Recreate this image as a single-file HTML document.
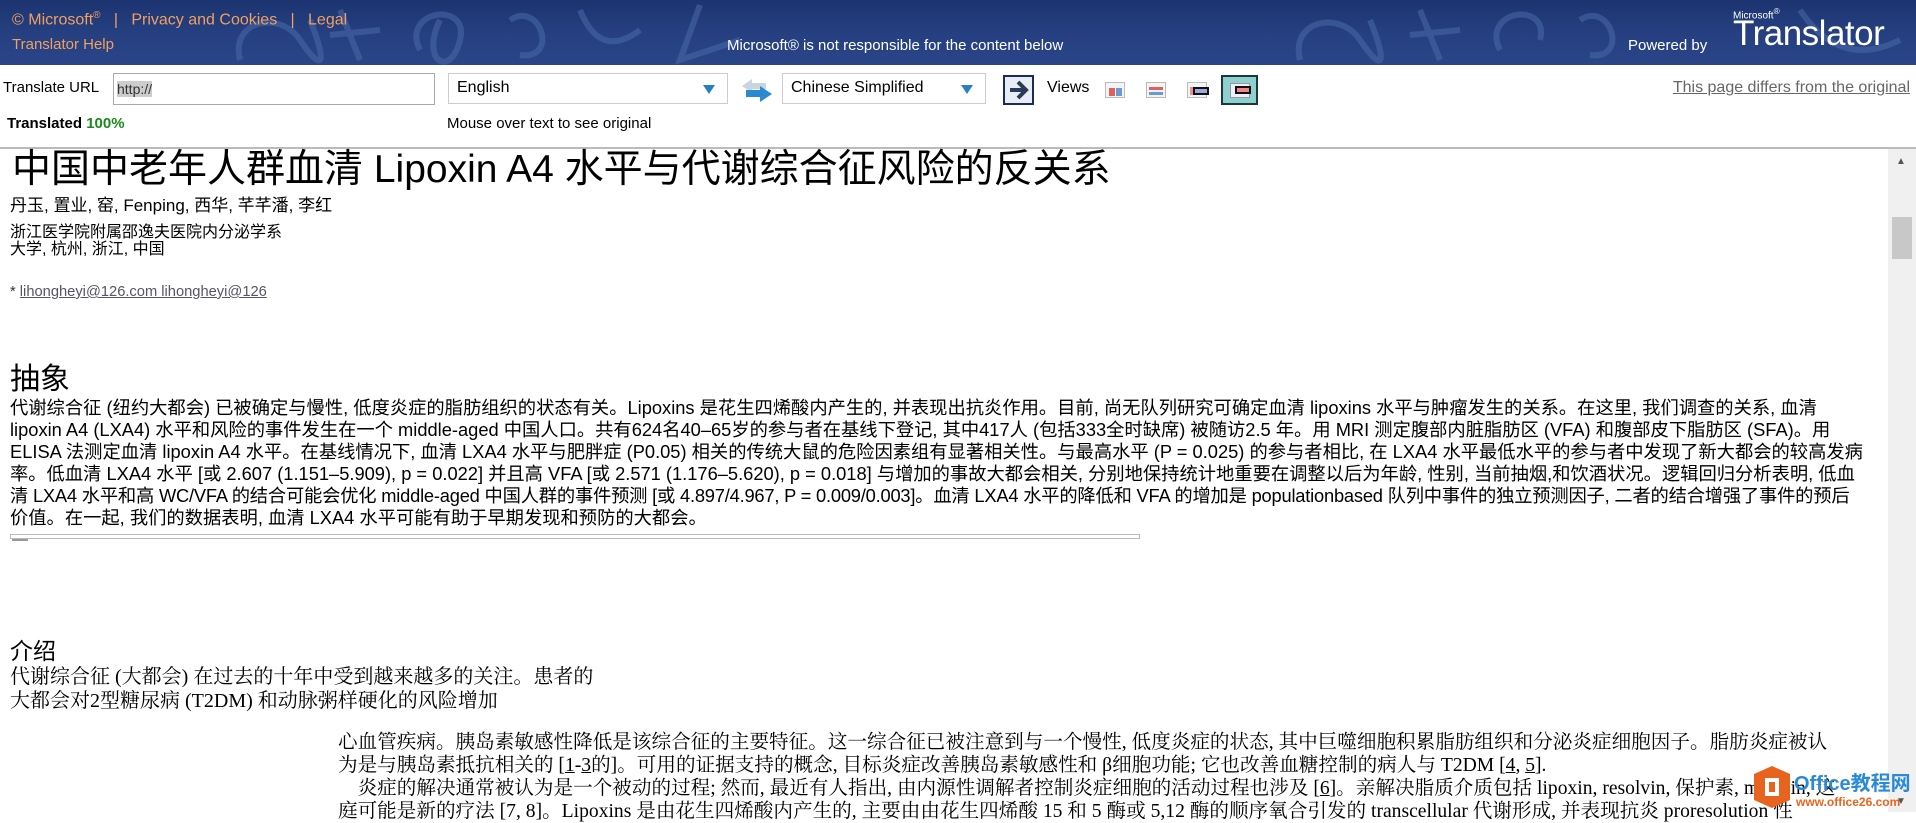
<!DOCTYPE html>
<html><head><meta charset="utf-8"><style>
*{margin:0;padding:0;box-sizing:border-box}
body{width:1916px;height:812px;overflow:hidden;background:#fff;position:relative;font-family:"Liberation Sans","Noto Sans CJK SC",sans-serif;color:#000}
.a{position:absolute;white-space:nowrap}
#hdr{position:absolute;left:0;top:0;width:1916px;height:65px;background:linear-gradient(180deg,#1c3470 0%,#253f80 50%,#2a4688 100%);overflow:hidden}
.or{color:#f0a060;font-size:16px}
.wh{color:#fff;font-size:15px}
.sel{position:absolute;height:31px;border:1px solid #ccc;background:#fff;font-size:16px;padding:5px 8px}
.tri{position:absolute;right:12px;top:11px;width:0;height:0;border-left:6px solid transparent;border-right:6px solid transparent;border-top:9px solid #2a7fc0}
.cal{font-family:"Liberation Sans Narrow","Liberation Sans","Noto Sans CJK SC",sans-serif}
.ser{font-family:"Liberation Serif","Noto Serif CJK SC",serif}
.ab div{height:22px;line-height:22px;font-size:18.3px}
.vi{position:absolute;top:82px;width:20px;height:16px;border:1px solid #bbb;background:#f4f4f4}
</style></head><body>
<div id="hdr">
<svg width="1916" height="65" style="position:absolute;left:0;top:0" fill="none" stroke="#4a6aa8" stroke-width="6" opacity="0.55">
<path d="M240 60 C230 20 280 10 300 40 S330 70 310 20"/><path d="M340 10 L360 60 M330 35 L380 30"/><path d="M420 50 C400 10 470 0 460 40 S420 60 440 20"/><path d="M510 20 C540 0 560 60 520 55"/><path d="M580 10 Q600 60 640 30"/><path d="M700 5 L680 60 L740 40"/>
<path d="M1300 60 C1290 20 1340 10 1360 40 S1390 70 1370 20"/><path d="M1420 10 L1440 60 M1410 35 L1460 30"/><path d="M1500 50 C1480 10 1550 0 1540 40"/><path d="M1580 20 C1610 0 1630 60 1590 55"/><path d="M1800 10 Q1840 70 1900 40"/>
</svg>
<div class="a or" style="left:12px;top:10px">© Microsoft<sup style="font-size:10px">®</sup> &nbsp; | &nbsp; Privacy and Cookies &nbsp; | &nbsp; Legal</div>
<div class="a or" style="left:12px;top:36px;font-size:15px">Translator Help</div>
<div class="a wh" style="left:727px;top:37px">Microsoft® is not responsible for the content below</div>
<div class="a wh" style="left:1628px;top:37px">Powered by</div>
<div class="a" style="left:1733px;top:6px;color:#fff;font-size:10px">Microsoft<sup>®</sup></div>
<div class="a" style="left:1733px;top:14px;color:#fff;font-size:35px;letter-spacing:-0.5px">Translator</div>
</div>
<div class="a" style="left:3px;top:79px;font-size:15px">Translate URL</div>
<div class="a" style="left:113px;top:73px;width:322px;height:32px;border:1px solid #aaa;background:#fff"><span style="position:absolute;left:3px;top:7px;background:#ccc;font-size:14px;color:#333">http://</span></div>
<div class="sel" style="left:448px;top:73px;width:280px">English<div class="tri"></div></div>
<svg class="a" style="left:738px;top:76px" width="36" height="28"><path d="M4 10 L14 3 L14 7 L28 7 L28 13 L14 13 L14 17Z" fill="#c8d4e0"/><path d="M34 18 L22 10 L22 14 L8 14 L8 21 L22 21 L22 26Z" fill="#2a8ad0"/></svg>
<div class="sel" style="left:782px;top:73px;width:204px">Chinese Simplified<div class="tri"></div></div>
<div class="a" style="left:1003px;top:75px;width:31px;height:30px;border:2px solid #1c2a5a;background:#e8ecf4"><svg width="27" height="26"><path d="M5 13 H20 M13 5 L21 13 L13 21" stroke="#2a3a5a" stroke-width="4" fill="none"/></svg></div>
<div class="a" style="left:1047px;top:79px;font-size:16px">Views</div>
<div class="vi" style="left:1105px"><div style="position:absolute;left:3px;top:5px;width:6px;height:8px;background:#e06060"></div><div style="position:absolute;left:10px;top:5px;width:6px;height:8px;background:#6a9ad0"></div></div>
<div class="vi" style="left:1146px"><div style="position:absolute;left:2px;top:4px;width:14px;height:3px;background:#e06060"></div><div style="position:absolute;left:2px;top:9px;width:14px;height:3px;background:#6a9ad0"></div></div>
<div class="vi" style="left:1187px"><div style="position:absolute;left:2px;top:4px;width:8px;height:8px;background:#e89090"></div><div style="position:absolute;left:5px;top:4px;width:16px;height:8px;border:2px solid #111;background:#9ad"></div></div>
<div class="a" style="left:1221px;top:75px;width:37px;height:30px;border:2px solid #1a3a3a;background:#8ed0d0"><div style="position:absolute;left:7px;top:6px;width:20px;height:15px;border:1px solid #999;background:#eef"></div><div style="position:absolute;left:12px;top:9px;width:16px;height:8px;border:2px solid #111;background:#e88"></div></div>
<div class="a" style="right:6px;top:79px;font-size:16px;color:#666;text-decoration:underline">This page differs from the original</div>
<div class="a" style="left:7px;top:115px;font-size:15px;font-weight:bold">Translated <span style="color:#1a8a1a">100%</span></div>
<div class="a" style="left:447px;top:115px;font-size:15px">Mouse over text to see original</div>
<div class="a" style="left:0;top:147px;width:1916px;height:2px;background:#bbb"></div>
<div class="a" style="left:1888px;top:149px;width:28px;height:663px;background:#f0f0f0"></div>
<div class="a" style="left:1892px;top:217px;width:20px;height:42px;background:#c8c8c8"></div>
<div class="a" style="left:1896px;top:156px;font-size:10px;color:#555">▲</div>
<div class="a" style="left:1896px;top:796px;font-size:10px;color:#555">▼</div>
<div class="a cal" style="left:12px;top:146px;font-size:39px;line-height:48px">中国中老年人群血清 Lipoxin A4 水平与代谢综合征风险的反关系</div>
<div class="a cal" style="left:10px;top:191px;font-size:17px">丹玉, 置业, 窑, Fenping, 西华, 芊芊潘, 李红</div>
<div class="a cal" style="left:10px;top:224px;font-size:16px;line-height:17px">浙江医学院附属邵逸夫医院内分泌学系<br>大学, 杭州, 浙江, 中国</div>
<div class="a cal" style="left:10px;top:284px;font-size:14.7px;color:#333">* <span style="text-decoration:underline;color:#556">lihongheyi@126.com lihongheyi@126</span></div>
<div class="a cal" style="left:10px;top:354px;font-size:30px">抽象</div>
<div class="a ab cal" style="left:10px;top:397px">
<div>代谢综合征 (纽约大都会) 已被确定与慢性, 低度炎症的脂肪组织的状态有关。Lipoxins 是花生四烯酸内产生的, 并表现出抗炎作用。目前, 尚无队列研究可确定血清 lipoxins 水平与肿瘤发生的关系。在这里, 我们调查的关系, 血清</div>
<div>lipoxin A4 (LXA4) 水平和风险的事件发生在一个 middle-aged 中国人口。共有624名40–65岁的参与者在基线下登记, 其中417人 (包括333全时缺席) 被随访2.5 年。用 MRI 测定腹部内脏脂肪区 (VFA) 和腹部皮下脂肪区 (SFA)。用</div>
<div>ELISA 法测定血清 lipoxin A4 水平。在基线情况下, 血清 LXA4 水平与肥胖症 (P0.05) 相关的传统大鼠的危险因素组有显著相关性。与最高水平 (P = 0.025) 的参与者相比, 在 LXA4 水平最低水平的参与者中发现了新大都会的较高发病</div>
<div>率。低血清 LXA4 水平 [或 2.607 (1.151–5.909), p = 0.022] 并且高 VFA [或 2.571 (1.176–5.620), p = 0.018] 与增加的事故大都会相关, 分别地保持统计地重要在调整以后为年龄, 性别, 当前抽烟,和饮酒状况。逻辑回归分析表明, 低血</div>
<div style="letter-spacing:-0.2px">清 LXA4 水平和高 WC/VFA 的结合可能会优化 middle-aged 中国人群的事件预测 [或 4.897/4.967, P = 0.009/0.003]。血清 LXA4 水平的降低和 VFA 的增加是 populationbased 队列中事件的独立预测因子, 二者的结合增强了事件的预后</div>
<div>价值。在一起, 我们的数据表明, 血清 LXA4 水平可能有助于早期发现和预防的大都会。</div>
</div>
<div class="a" style="left:10px;top:534px;width:1130px;height:5px;border:1px solid #bbb"></div>
<div class="a" style="left:12px;top:539px;width:16px;height:2px;background:#999"></div>
<div class="a cal" style="left:10px;top:632px;font-size:23px">介绍</div>
<div class="a ser" style="left:10px;top:665px;font-size:20px;line-height:24px">代谢综合征 (大都会) 在过去的十年中受到越来越多的关注。患者的<br>大都会对2型糖尿病 (T2DM) 和动脉粥样硬化的风险增加</div>
<div class="a ser" style="left:338px;top:731px;font-size:19.6px;line-height:23px">心血管疾病。胰岛素敏感性降低是该综合征的主要特征。这一综合征已被注意到与一个慢性, 低度炎症的状态, 其中巨噬细胞积累脂肪组织和分泌炎症细胞因子。脂肪炎症被认<br>为是与胰岛素抵抗相关的 [<u>1</u>-<u>3</u>的]。可用的证据支持的概念, 目标炎症改善胰岛素敏感性和 β细胞功能; 它也改善血糖控制的病人与 T2DM [<u>4</u>, <u>5</u>].<br>&nbsp;&nbsp;&nbsp;&nbsp;炎症的解决通常被认为是一个被动的过程; 然而, 最近有人指出, 由内源性调解者控制炎症细胞的活动过程也涉及 [<u>6</u>]。亲解决脂质介质包括 lipoxin, resolvin, 保护素, maresin, 这<br>庭可能是新的疗法 [7, 8]。Lipoxins 是由花生四烯酸内产生的, 主要由由花生四烯酸 15 和 5 酶或 5,12 酶的顺序氧合引发的 transcellular 代谢形成, 并表现抗炎 proresolution 性</div>
<svg class="a" style="left:1752px;top:764px" width="40" height="46"><path d="M20 2 L38 10 V36 L20 44 L2 36 V10Z" fill="#e8641e"/><rect x="13" y="14" width="14" height="18" fill="#fff"/><rect x="17" y="18" width="6" height="10" fill="#e8641e"/></svg>
<div class="a" style="left:1794px;top:767px;font-size:20px;font-weight:bold;color:#2a8ad8">Office教程网</div>
<div class="a" style="left:1796px;top:795px;font-size:12px;font-weight:bold;color:#e8641e">www.office26.com</div>
</body></html>
